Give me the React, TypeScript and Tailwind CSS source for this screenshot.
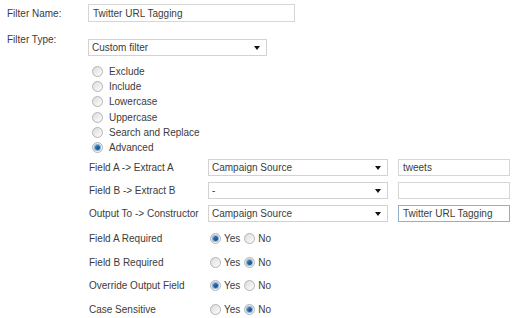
import React from "react";

const font = { fontFamily: '"Liberation Sans", Arial, sans-serif' };

function Radio({ checked }: { checked?: boolean }) {
  return (
    <span className="inline-flex w-[11px] h-[11px] shrink-0 items-center justify-center rounded-full border border-[#b4b4b4] bg-gradient-to-br from-[#dcdcdc] to-[#fdfdfd]">
      {checked && (
        <span className="block w-[5px] h-[5px] rounded-full bg-gradient-to-br from-[#3f86c6] to-[#0f3f7a] ring-1 ring-[#86b0d8]" />
      )}
    </span>
  );
}

function Select({ value, w }: { value: string; w: string }) {
  return (
    <div className={`${w} h-[17px] flex items-center justify-between border border-[#d2d2d2] bg-white pl-[3px] pr-[6px]`}>
      <span>{value}</span>
      <svg width="6" height="4" viewBox="0 0 6 4">
        <polygon points="0,0 6,0 3,4" fill="#111" />
      </svg>
    </div>
  );
}

function Input({ value, focus, w }: { value: string; focus?: boolean; w: string }) {
  return (
    <div
      className={`${w} h-[17px] flex items-center border ${focus ? "border-[#8fb0d0]" : "border-[#d6d6d6]"} bg-white pl-[4px]`}
    >
      {value}
    </div>
  );
}

function YesNo({ yes }: { yes: boolean }) {
  return (
    <div className="flex items-center">
      <Radio checked={yes} />
      <span className="ml-[3px]">Yes</span>
      <span className="ml-[4px]" />
      <Radio checked={!yes} />
      <span className="ml-[3px]">No</span>
    </div>
  );
}

export default function App() {
  const radios = ["Exclude", "Include", "Lowercase", "Uppercase", "Search and Replace", "Advanced"];
  return (
    <div className="w-[518px] h-[318px] bg-white text-[10px] text-[#3c3c3c] overflow-hidden pl-[7px] pt-[4px]" style={font}>
      <div className="flex items-center h-[18px]">
        <div className="w-[81px]">Filter Name:</div>
        <Input value="Twitter URL Tagging" w="w-[207px] h-[18px]" />
      </div>
      <div className="flex mt-[12px]">
        <div className="w-[81px] leading-[12px]">Filter Type:</div>
        <div className="mt-[5px]">
          <Select value="Custom filter" w="w-[179px]" />
        </div>
      </div>
      <div className="ml-[85px] mt-[8px] flex flex-col">
        {radios.map((r, i) => (
          <div key={r} className="flex items-center h-[15.2px]">
            <Radio checked={i === 5} />
            <span className="ml-[6px]">{r}</span>
          </div>
        ))}
      </div>
      <div className="ml-[82px] mt-[1px] flex flex-col">
        <div className="flex items-center h-[23px]">
          <div className="w-[119px]">Field A -&gt; Extract A</div>
          <Select value="Campaign Source" w="w-[180px]" />
          <div className="w-[10px]" />
          <Input value="tweets" w="w-[112px]" />
        </div>
        <div className="flex items-center h-[23px]">
          <div className="w-[119px]">Field B -&gt; Extract B</div>
          <Select value="-" w="w-[180px]" />
          <div className="w-[10px]" />
          <Input value="" w="w-[112px]" />
        </div>
        <div className="flex items-center h-[23px]">
          <div className="w-[119px]">Output To -&gt; Constructor</div>
          <Select value="Campaign Source" w="w-[180px]" />
          <div className="w-[10px]" />
          <Input value="Twitter URL Tagging" focus w="w-[112px]" />
        </div>
        <div className="mt-[2px] flex flex-col">
          {[
            ["Field A Required", true],
            ["Field B Required", false],
            ["Override Output Field", true],
            ["Case Sensitive", false],
          ].map(([l, y]) => (
            <div key={l as string} className="flex items-center h-[23.5px]">
              <div className="w-[121px]">{l as string}</div>
              <YesNo yes={y as boolean} />
            </div>
          ))}
        </div>
      </div>
    </div>
  );
}
